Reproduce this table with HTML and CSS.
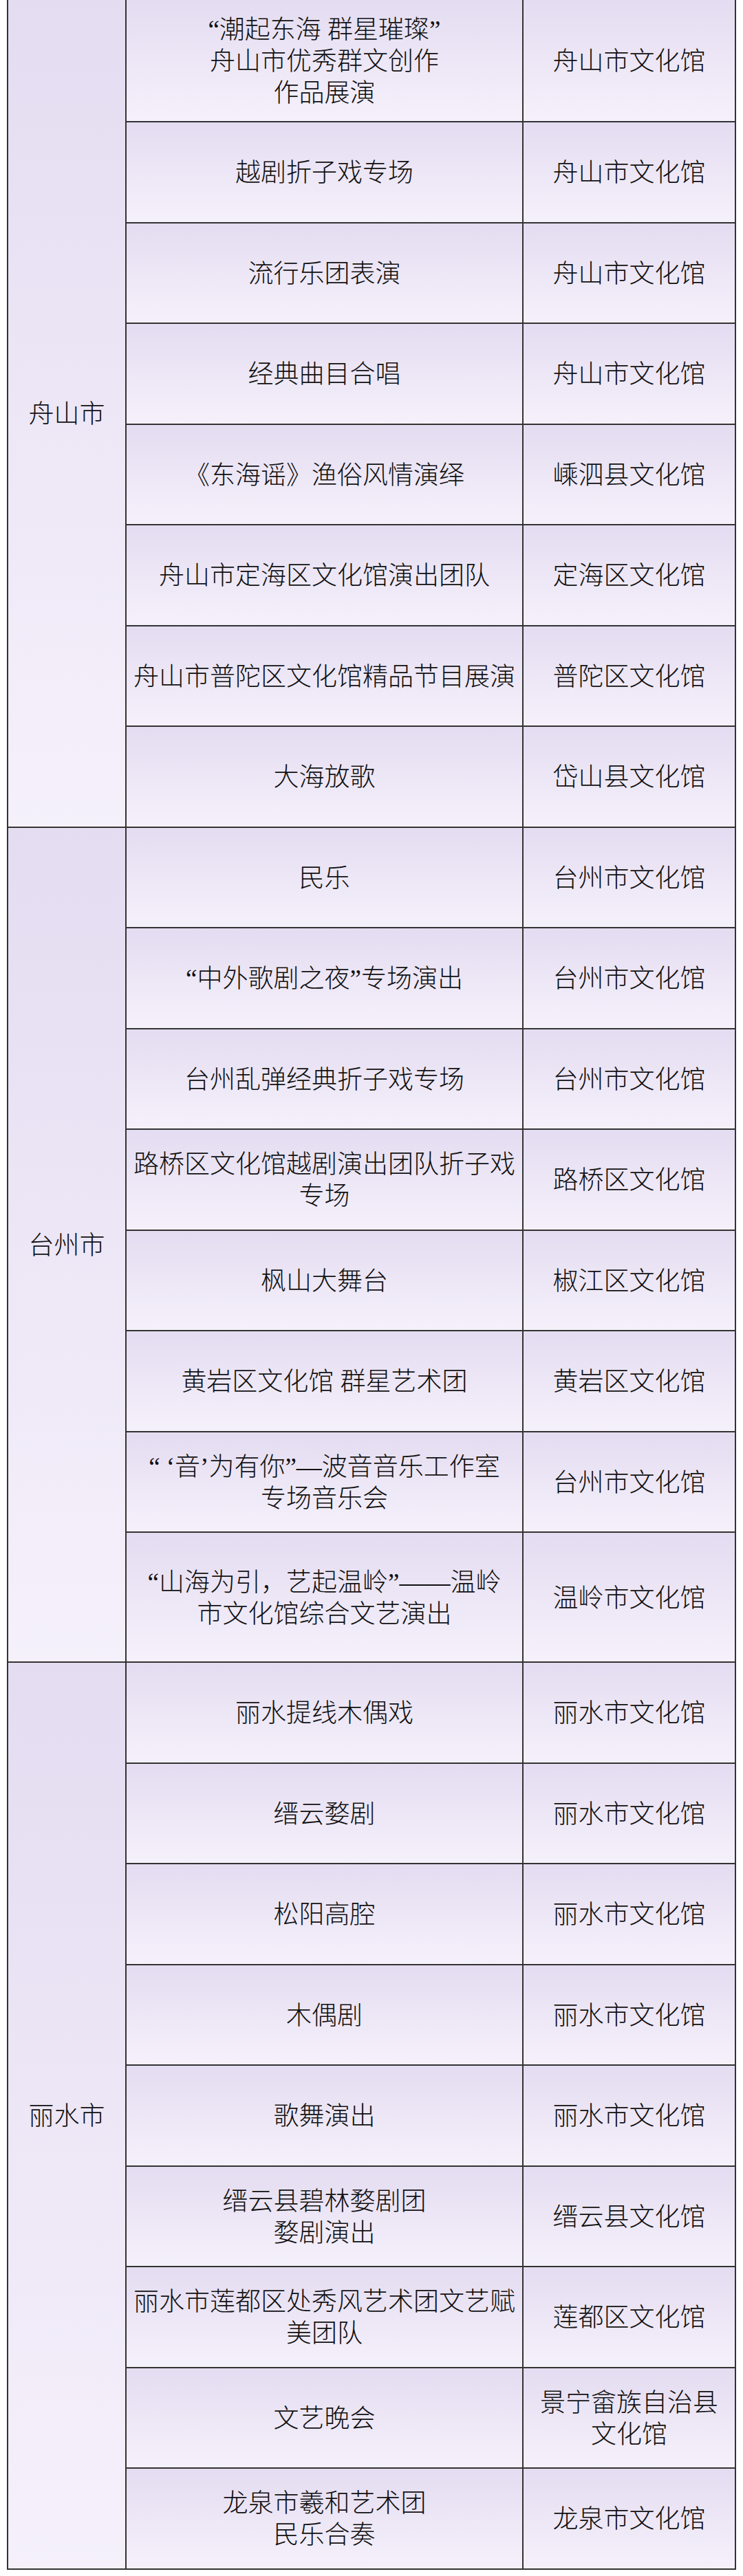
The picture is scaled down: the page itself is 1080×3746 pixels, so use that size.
FILE: index.html
```html
<!DOCTYPE html>
<html lang="zh-CN">
<head>
<meta charset="utf-8">
<title>演出列表</title>
<link rel="stylesheet" href="styles.css">
</head>
<body>
<div class="table">
  <div class="cell region r8">舟山市</div>
  <div class="cell item">“潮起东海 群星璀璨”<br>舟山市优秀群文创作<br>作品展演</div>
  <div class="cell org">舟山市文化馆</div>
  <div class="cell item">越剧折子戏专场</div>
  <div class="cell org">舟山市文化馆</div>
  <div class="cell item">流行乐团表演</div>
  <div class="cell org">舟山市文化馆</div>
  <div class="cell item">经典曲目合唱</div>
  <div class="cell org">舟山市文化馆</div>
  <div class="cell item">《东海谣》渔俗风情演绎</div>
  <div class="cell org">嵊泗县文化馆</div>
  <div class="cell item">舟山市定海区文化馆演出团队</div>
  <div class="cell org">定海区文化馆</div>
  <div class="cell item">舟山市普陀区文化馆精品节目展演</div>
  <div class="cell org">普陀区文化馆</div>
  <div class="cell item">大海放歌</div>
  <div class="cell org">岱山县文化馆</div>

  <div class="cell region r8">台州市</div>
  <div class="cell item">民乐</div>
  <div class="cell org">台州市文化馆</div>
  <div class="cell item">“中外歌剧之夜”专场演出</div>
  <div class="cell org">台州市文化馆</div>
  <div class="cell item">台州乱弹经典折子戏专场</div>
  <div class="cell org">台州市文化馆</div>
  <div class="cell item">路桥区文化馆越剧演出团队折子戏<br>专场</div>
  <div class="cell org">路桥区文化馆</div>
  <div class="cell item">枫山大舞台</div>
  <div class="cell org">椒江区文化馆</div>
  <div class="cell item">黄岩区文化馆 群星艺术团</div>
  <div class="cell org">黄岩区文化馆</div>
  <div class="cell item">“ ‘音’为有你”—波音音乐工作室<br>专场音乐会</div>
  <div class="cell org">台州市文化馆</div>
  <div class="cell item">“山海为引，艺起温岭”——温岭<br>市文化馆综合文艺演出</div>
  <div class="cell org">温岭市文化馆</div>

  <div class="cell region r9">丽水市</div>
  <div class="cell item">丽水提线木偶戏</div>
  <div class="cell org">丽水市文化馆</div>
  <div class="cell item">缙云婺剧</div>
  <div class="cell org">丽水市文化馆</div>
  <div class="cell item">松阳高腔</div>
  <div class="cell org">丽水市文化馆</div>
  <div class="cell item">木偶剧</div>
  <div class="cell org">丽水市文化馆</div>
  <div class="cell item">歌舞演出</div>
  <div class="cell org">丽水市文化馆</div>
  <div class="cell item">缙云县碧林婺剧团<br>婺剧演出</div>
  <div class="cell org">缙云县文化馆</div>
  <div class="cell item">丽水市莲都区处秀风艺术团文艺赋<br>美团队</div>
  <div class="cell org">莲都区文化馆</div>
  <div class="cell item">文艺晚会</div>
  <div class="cell org">景宁畲族自治县<br>文化馆</div>
  <div class="cell item">龙泉市羲和艺术团<br>民乐合奏</div>
  <div class="cell org">龙泉市文化馆</div>
</div>
</body>
</html>
```

FILE: styles.css
```css
html, body {
  margin: 0;
  padding: 0;
  background: #ffffff;
}

body {
  font-family: "Liberation Serif", "Noto Sans CJK SC", serif;
  color: #111111;
}

.table {
  margin-left: 10px;
  width: 1060px;
  box-sizing: border-box;
  padding: 0 2px 2px 2px;
  background: #333333;
  display: grid;
  grid-template-columns: 170px 575px 307px;
  grid-template-rows: 176px repeat(14, 144.5px) 187px repeat(9, 144.5px);
  gap: 2px;
}

.cell {
  background: linear-gradient(to bottom, #e4dcf1 0%, #f5f1fb 100%);
  display: flex;
  align-items: center;
  justify-content: center;
  text-align: center;
  font-size: 37px;
  line-height: 46px;
  font-weight: 300;
  white-space: nowrap;
  padding: 4px 4px 0 4px;
  box-sizing: border-box;
}

.region {
  grid-column: 1;
}

.r8 {
  grid-row: span 8;
}

.r9 {
  grid-row: span 9;
}

.item {
  grid-column: 2;
}

.org {
  grid-column: 3;
}
```
